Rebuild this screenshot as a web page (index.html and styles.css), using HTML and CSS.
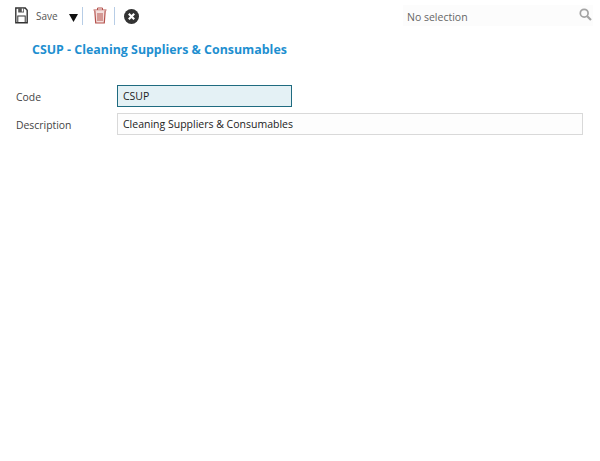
FILE: index.html
```html
<!DOCTYPE html>
<html lang="en">
<head>
<meta charset="utf-8">
<title>CSUP</title>
<link rel="stylesheet" href="styles.css">
</head>
<body>
<header class="toolbar">
  <div class="actions">
    <svg class="icon save-icon" width="13" height="17" viewBox="0 0 13 17">
      <path d="M.8 1h9.4l2 2.3v12.5H.8z" fill="#fff" stroke="#333" stroke-width="1.4"/>
      <rect x="3.2" y="1" width="5.8" height="4.5" fill="#555"/>
      <rect x="6.8" y="1.6" width="1.4" height="3" fill="#fff"/>
      <rect x="2.8" y="9" width="7.4" height="6.5" fill="#fff" stroke="#333"/>
    </svg>
    <span class="save-label">Save</span>
    <svg class="icon caret" width="9" height="8" viewBox="0 0 9 8"><path d="M0 0h9L4.5 8z" fill="#111"/></svg>
    <span class="sep sep-a"></span>
    <svg class="icon trash" width="14" height="17" viewBox="0 0 14 17" fill="none" stroke="#b5524d">
      <path d="M0.5 3h13M4.5 3V1h5v2" stroke-width="1"/>
      <path d="M1.8 3.5l.9 12.5h8.6l.9-12.5" fill="#f3dfdd" stroke-width="1.2"/>
      <path d="M5 6v8M7 6v8M9 6v8" stroke-width="1"/>
    </svg>
    <span class="sep sep-b"></span>
    <svg class="icon close" width="15" height="15" viewBox="0 0 15 15">
      <circle cx="7.5" cy="7.5" r="7.5" fill="#333"/>
      <path d="M4.8 4.8l5.4 5.4M10.2 4.8l-5.4 5.4" stroke="#fff" stroke-width="2.2"/>
    </svg>
  </div>
  <div class="selector">
    <span class="selector-text">No selection</span>
    <svg class="search" width="13" height="13" viewBox="0 0 13 13" fill="none" stroke="#a3a3a3">
      <circle cx="5.2" cy="5.2" r="3.9" stroke-width="1.7"/>
      <path d="M8.2 8.2l3.8 3.8" stroke-width="2.2"/>
    </svg>
  </div>
</header>
<main class="content">
  <h1 class="title">CSUP - Cleaning Suppliers &amp; Consumables</h1>
  <form class="form">
    <div class="row row-code">
      <label class="label" for="code">Code</label>
      <input class="field field-code" id="code" value="CSUP">
    </div>
    <div class="row">
      <label class="label" for="desc">Description</label>
      <input class="field field-desc" id="desc" value="Cleaning Suppliers &amp; Consumables">
    </div>
  </form>
</main>
</body>
</html>
```
FILE: styles.css
```css
* { box-sizing: border-box; }
html, body { margin: 0; height: 100%; background: #fff; }
body { font-family: "Open Sans", sans-serif; font-size: 10px; color: #333; overflow: hidden; }
.toolbar { display: flex; justify-content: space-between; height: 30px; padding: 6px 7px 0 15px; }
.actions { display: flex; align-items: flex-start; }
.save-icon { margin-top: 1px; }
.save-label { margin-left: 8px; margin-top: 3px; line-height: 14px; color: #555; }
.caret { margin-left: 11px; margin-top: 8px; }
.sep { width: 1px; height: 18px; margin-top: 1px; background: #b7cde6; }
.sep-a { margin-left: 4px; }
.trash { margin-left: 10px; margin-top: 1px; }
.sep-b { margin-left: 7px; }
.close { margin-left: 9px; margin-top: 3px; }
.selector { display: flex; align-items: center; justify-content: space-between; width: 190px; height: 21px; margin-top: -1px; padding: 0 1px 0 4px; background: #fcfcfc; }
.selector-text { color: #666; font-size: 10.5px; margin-top: 3px; }
.search { margin-top: -3px; }
.content { padding: 0 17px 0 16px; }
.title { margin: 11px 0 27px 16px; font-size: 12.4px; line-height: 17px; font-weight: 700; color: #1e8fd0; }
.row { display: flex; align-items: center; }
.row-code { margin-bottom: 6px; }
.label { width: 101px; font-size: 10.4px; padding-top: 1px; color: #444; }
.field { height: 22px; padding: 0 5px; font: 10.5px "Open Sans", sans-serif; color: #222; border: 1px solid #d9d9d9; outline: none; background: #fdfdfd; }
.field-code { width: 175px; background: #e4f1f5; border: 1px solid #1f6b80; }
.field-desc { width: 466px; }
```
